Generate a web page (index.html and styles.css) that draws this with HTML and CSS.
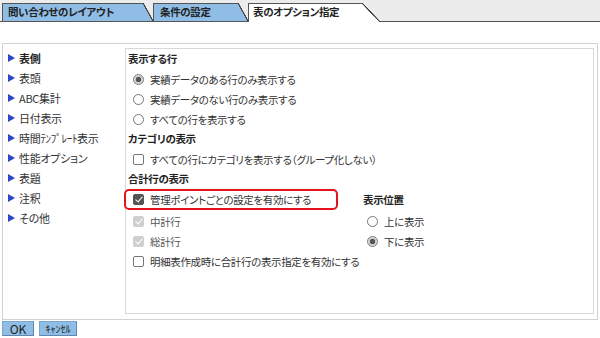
FILE: index.html
```html
<!DOCTYPE html>
<html lang="ja">
<head>
  <meta charset="UTF-8">
  <title>表のオプション指定</title>
  <link rel="stylesheet" href="styles.css">
</head>
<body>

  <div class="tabbar">
    <div class="tab tab-1">問い合わせのレイアウト</div>
    <div class="tab tab-2">条件の設定</div>
    <div class="tab tab-3 active">表のオプション指定</div>
  </div>

  <div class="frame">
    <ul class="nav">
      <li class="current"><span class="arrow"></span>表側</li>
      <li><span class="arrow"></span>表頭</li>
      <li><span class="arrow"></span>ABC集計</li>
      <li><span class="arrow"></span>日付表示</li>
      <li><span class="arrow"></span>時間ﾃﾝﾌﾟﾚｰﾄ表示</li>
      <li><span class="arrow"></span>性能オプション</li>
      <li><span class="arrow"></span>表題</li>
      <li><span class="arrow"></span>注釈</li>
      <li><span class="arrow"></span>その他</li>
    </ul>

    <div class="panel">
      <div class="head">表示する行</div>
      <div class="row"><span class="radio on"></span>実績データのある行のみ表示する</div>
      <div class="row"><span class="radio"></span>実績データのない行のみ表示する</div>
      <div class="row"><span class="radio"></span>すべての行を表示する</div>

      <div class="head">カテゴリの表示</div>
      <div class="row"><span class="check"></span>すべての行にカテゴリを表示する（グループ化しない）</div>

      <div class="head">合計行の表示</div>
      <div class="split">
        <div class="col-left">
          <div class="row tall hl"><span class="check on"></span>管理ポイントごとの設定を有効にする</div>
          <div class="row off"><span class="check on dis"></span>中計行</div>
          <div class="row off"><span class="check on dis"></span>総計行</div>
        </div>
        <div class="col-right">
          <div class="head tall">表示位置</div>
          <div class="row"><span class="radio"></span>上に表示</div>
          <div class="row"><span class="radio on"></span>下に表示</div>
        </div>
      </div>
      <div class="row"><span class="check"></span>明細表作成時に合計行の表示指定を有効にする</div>
    </div>
  </div>

  <div class="buttons">
    <button class="btn">OK</button>
    <button class="btn">ｷｬﾝｾﾙ</button>
  </div>

</body>
</html>
```

FILE: styles.css
```css
body {
  margin: 0;
  padding: 0;
  background: #fff;
  font-family: "Noto Sans CJK JP", "Noto Sans", sans-serif;
  font-size: 10.5px;
  letter-spacing: -0.35px;
  font-feature-settings: "palt";
  color: #333;
}

/* Tabs */
.tabbar {
  display: flex;
  align-items: flex-end;
  padding-left: 2px;
  background: #ececec;
  border-bottom: 1px solid #555;
  box-sizing: border-box;
  height: 22px;
}

.tab {
  --fill: #8fbde6;
  --s: 10px;
  box-sizing: border-box;
  height: 18px;
  line-height: 17px;
  padding: 0 0 0 5px;
  border-left: 1px solid #555;
  font-weight: bold;
  color: #222;
  white-space: nowrap;
  background:
    linear-gradient(#555, #555) left top / calc(100% - var(--s)) 1px no-repeat,
    linear-gradient(to top right, var(--fill) calc(50% - 0.8px), #444 calc(50% - 0.4px), #444 calc(50% + 0.4px), transparent calc(50% + 0.8px)) right top / var(--s) 100% no-repeat,
    linear-gradient(var(--fill), var(--fill)) left top / calc(100% - var(--s)) 100% no-repeat;
}

.tab-1 { width: 151px; }
.tab-2 { width: 95px; padding-left: 6px; }
.tab-3 { width: 132px; --s: 18px; }

.tab.active {
  --fill: #fff;
  height: 19px;
  margin-bottom: -1px;
  padding-left: 4px;
}

/* Outer frame */
.frame {
  display: flex;
  margin: 21px 2px 0 2px;
  height: 277px;
  box-sizing: border-box;
  padding: 4px 3px 5px 0;
  border: 1px solid #d2d2d2;
}

.nav {
  list-style: none;
  margin: 0;
  padding: 0 0 0 5px;
  width: 117px;
  font-size: 11px;
  letter-spacing: -0.3px;
}

.nav li {
  display: flex;
  align-items: center;
  gap: 4px;
  height: 20px;
}

.nav li.current {
  font-weight: bold;
  color: #222;
}

.arrow {
  width: 0;
  height: 0;
  border-top: 4.5px solid transparent;
  border-bottom: 4.5px solid transparent;
  border-left: 7px solid #2848c8;
}

/* Right panel */
.panel {
  flex: 1;
  border: 1px solid #d8d8d8;
  padding-left: 2px;
}

.head {
  height: 20px;
  line-height: 19px;
  font-weight: bold;
  color: #222;
}

.row {
  display: flex;
  align-items: center;
  gap: 6px;
  height: 20px;
  padding-left: 5px;
  white-space: nowrap;
}

.tall {
  height: 22px;
  line-height: 21px;
}

.row.off {
  color: #555;
}

.hl {
  box-sizing: border-box;
  width: 214px;
  margin-left: -4px;
  padding-left: 7px;
  border: 2px solid #e5141c;
  border-radius: 5px;
  height: 21px;
  margin-bottom: 1px;
}

.split {
  display: flex;
}

.col-left {
  width: 235px;
}

.col-right .row {
  padding-left: 4px;
}

/* Controls */
.radio {
  box-sizing: border-box;
  width: 11px;
  height: 11px;
  border: 1px solid #777;
  border-radius: 50%;
  background: #fff;
  flex: none;
}

.radio.on {
  background: radial-gradient(circle, #555 2.5px, #c8c8c8 3px, #e4e4e4 4.5px);
}

.check {
  box-sizing: border-box;
  width: 11px;
  height: 11px;
  border: 1px solid #777;
  border-radius: 2px;
  background: #fff;
  flex: none;
  position: relative;
}

.check.on {
  background: #555;
  border-color: #555;
}

.check.on::after {
  content: '';
  position: absolute;
  left: 3px;
  top: 0px;
  width: 3px;
  height: 6px;
  border-right: 1.5px solid #fff;
  border-bottom: 1.5px solid #fff;
  transform: rotate(40deg);
}

.check.dis {
  background: #cfcfcf;
  border-color: #cfcfcf;
}

/* Buttons */
.buttons {
  display: flex;
  gap: 5px;
  padding: 1px 2px 0 2px;
}

.btn {
  height: 15px;
  padding: 0;
  font-family: inherit;
  font-size: 11px;
  line-height: 13px;
  color: #222;
  background: #8fbde6;
  border: 1px solid #7aa6d0;
  border-right-color: #5f87b0;
  border-bottom-color: #5f87b0;
}

.btn:first-child { width: 32px; font-size: 12px; }
.btn:last-child { width: 38px; font-size: 10px; }
```
